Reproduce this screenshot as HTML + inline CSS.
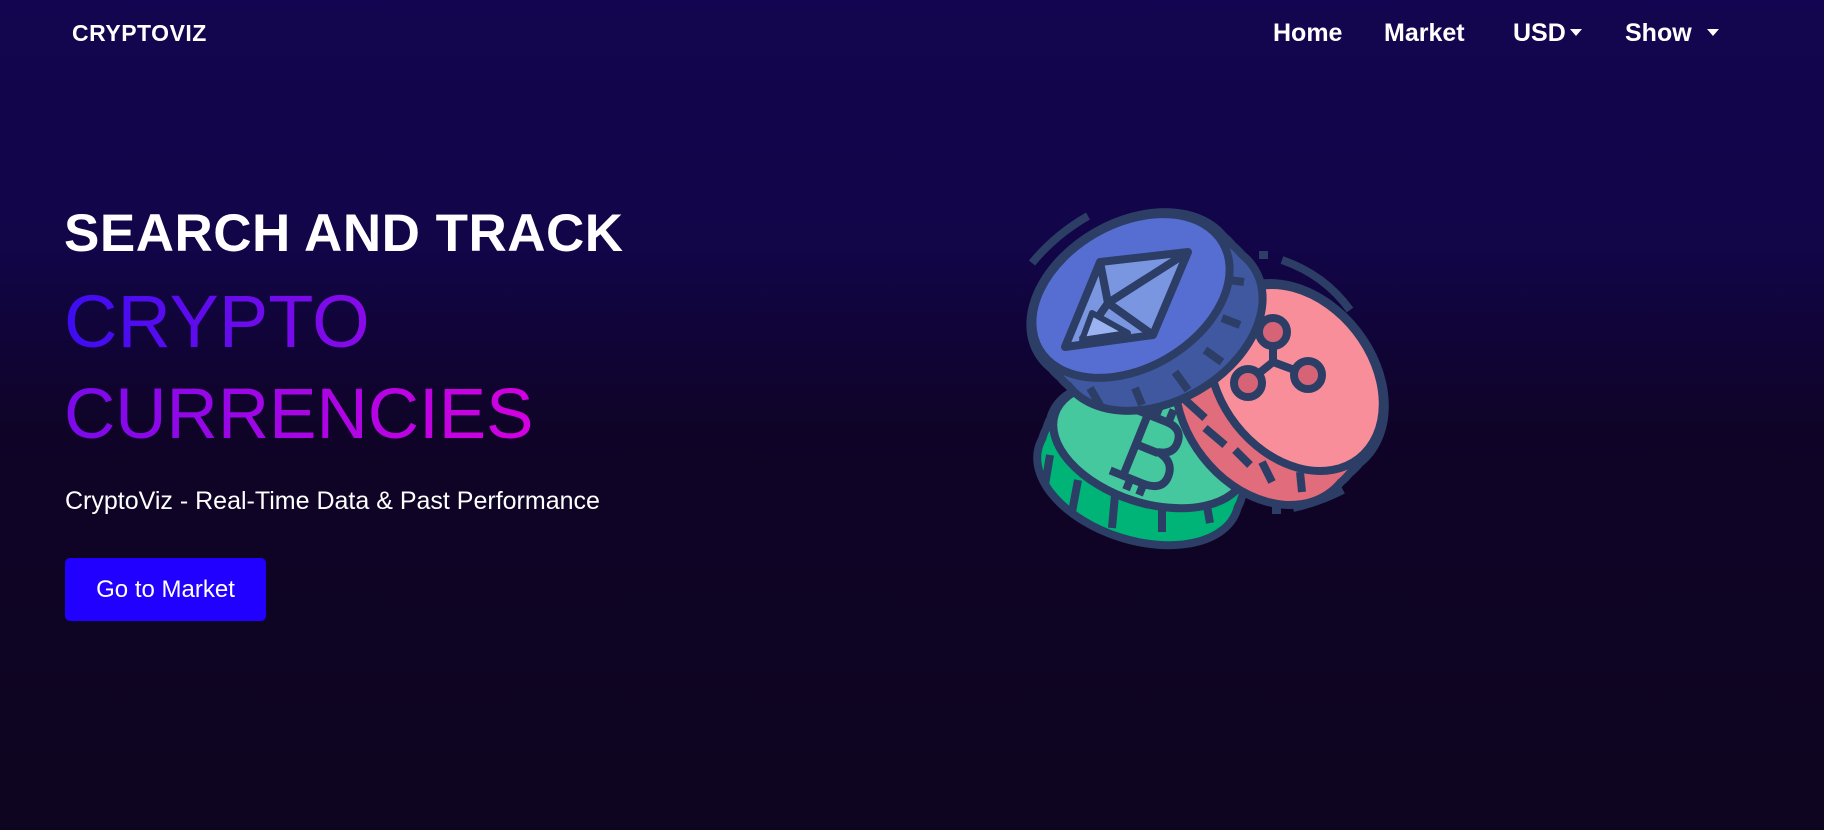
<!DOCTYPE html>
<html><head><meta charset="utf-8"><style>
html,body{margin:0;width:1824px;height:830px;overflow:hidden}
body{background:linear-gradient(180deg,#13054f 0%,#120548 30%,#0f0427 52%,#0e0520 100%);font-family:"Liberation Sans",sans-serif;color:#fff;position:relative}
.logo{position:absolute;left:72px;top:20px;font-size:23px;font-weight:bold;letter-spacing:0.5px}
.nav a{position:absolute;top:19px;font-size:25px;font-weight:bold;color:#fff;text-decoration:none}
.caret{display:inline-block;width:0;height:0;border-left:6px solid transparent;border-right:6px solid transparent;border-top:7px solid #fff;vertical-align:middle;margin-left:4px;margin-top:-4px}
h1{position:absolute;left:64px;top:203px;margin:0;font-size:53px;font-weight:bold;letter-spacing:0.5px;white-space:nowrap}
.g{position:absolute;left:64px;font-size:72px;line-height:1;-webkit-background-clip:text;background-clip:text;color:transparent;white-space:nowrap;display:inline-block}
.sub{position:absolute;left:65px;top:487px;font-size:25px}
.btn{position:absolute;left:65px;top:558px;width:201px;height:63px;background:#2200ff;border-radius:5px;font-size:24px;line-height:63px;text-align:center}
</style></head><body>
<div class="logo">CRYPTOVIZ</div>
<div class="nav">
<a style="left:1273px">Home</a>
<a style="left:1384px">Market</a>
<a style="left:1513px">USD<span class="caret"></span></a>
<a style="left:1625px">Show <span class="caret" style="margin-left:8px"></span></a>
</div>
<h1>SEARCH AND TRACK</h1>
<div class="g" style="top:285px;font-size:74px;background-image:linear-gradient(90deg,#3d0cf2,#8a0ae8)">CRYPTO</div>
<div class="g" style="top:379px;font-size:71px;background-image:linear-gradient(90deg,#7a0aea,#d400e0)">CURRENCIES</div>
<div class="sub">CryptoViz - Real-Time Data &amp; Past Performance</div>
<div class="btn">Go to Market</div>
<svg style="position:absolute;left:1000px;top:190px" width="400" height="380" viewBox="0 0 400 380">
<defs>
<ellipse id="eg" cx="0" cy="0" rx="100" ry="58"/>
<ellipse id="ep" cx="0" cy="0" rx="76" ry="102"/>
<ellipse id="eb" cx="0" cy="0" rx="106" ry="72"/>
</defs>
<g stroke="#2c3e66" stroke-width="8" fill="none" stroke-linecap="butt">
<path d="M32 73 Q55 45 88 26"/>
<path d="M259 65 L268 65"/>
<path d="M282 70 Q325 85 350 120"/>
<path d="M272 320 L281 320"/>
<path d="M293 318 Q320 312 343 300"/>
</g>
<g fill="#2c3e66" stroke="#2c3e66" stroke-width="16">
<use href="#eg" transform="translate(150 258) rotate(18)"/>
<use href="#eg" transform="translate(146 268) rotate(18)"/>
<use href="#eg" transform="translate(142 278) rotate(18)"/>
<use href="#eg" transform="translate(138 288) rotate(18)"/>
</g>
<g fill="#00b377">
<use href="#eg" transform="translate(146 268) rotate(18)"/>
<use href="#eg" transform="translate(142 278) rotate(18)"/>
<use href="#eg" transform="translate(138 288) rotate(18)"/>
</g>
<g stroke="#2c3e66" stroke-width="8">
<path d="M50 265 L45 295 M78 290 L72 322 M115 305 L112 338 M162 312 L162 342 M205 305 L210 333"/>
<use href="#eg" transform="translate(150 255) rotate(18)" fill="#45c89d"/>
</g>
<g transform="rotate(22 150 262)" stroke="#2c3e66" stroke-width="8" fill="#45c89d" stroke-linejoin="round">
<path d="M134 228 L154 228 Q172 228 172 244 Q172 256 158 259 Q176 262 176 278 Q176 294 154 294 L134 294 Z M134 260 L158 260"/>
<path d="M120 228 L134 228 M120 294 L134 294 M142 214 L142 228 M156 214 L156 228 M142 294 L142 306 M156 294 L156 306" fill="none"/>
</g>
<g fill="#2c3e66" stroke="#2c3e66" stroke-width="16">
<use href="#ep" transform="translate(294 190) rotate(-38)"/>
<use href="#ep" transform="translate(284 200) rotate(-38)"/>
<use href="#ep" transform="translate(274 210) rotate(-38)"/>
<use href="#ep" transform="translate(266 218) rotate(-38)"/>
</g>
<g fill="#e06c7c">
<use href="#ep" transform="translate(284 200) rotate(-38)"/>
<use href="#ep" transform="translate(274 210) rotate(-38)"/>
<use href="#ep" transform="translate(266 218) rotate(-38)"/>
</g>
<g stroke="#2c3e66" stroke-width="8">
<path d="M183 208 L205 228 M205 238 L225 255 M235 260 L250 275 M262 272 L272 292 M300 282 L302 302"/>
<use href="#ep" transform="translate(296 188) rotate(-38)" fill="#f78e9a"/>
<path d="M273 142 L273 172 L248 192 M273 172 L308 185" fill="none"/>
<circle cx="273" cy="142" r="14" fill="#d66476"/>
<circle cx="248" cy="193" r="14" fill="#d66476"/>
<circle cx="308" cy="185" r="14" fill="#d66476"/>
</g>
<g fill="#2c3e66" stroke="#2c3e66" stroke-width="16">
<use href="#eb" transform="translate(133 108) rotate(-30)"/>
<use href="#eb" transform="translate(142 117) rotate(-30)"/>
<use href="#eb" transform="translate(151 126) rotate(-30)"/>
<use href="#eb" transform="translate(160 135) rotate(-30)"/>
</g>
<g fill="#3f58a0">
<use href="#eb" transform="translate(142 117) rotate(-30)"/>
<use href="#eb" transform="translate(151 126) rotate(-30)"/>
<use href="#eb" transform="translate(160 135) rotate(-30)"/>
</g>
<g stroke="#2c3e66" stroke-width="8">
<path d="M90 198 L100 215 M135 198 L142 215 M175 182 L188 200 M205 160 L222 172 M222 128 L240 135 M228 90 L244 92"/>
<use href="#eb" transform="translate(131 106) rotate(-30)" fill="#566dd2"/>
</g>
<g stroke="#2c3e66" stroke-width="8" stroke-linejoin="round">
<path d="M100 72 L188 62 L153 145 L65 157 Z" fill="#7b96e0"/>
<path d="M108 113 L100 72 M108 113 L188 62 M108 113 L153 145 M108 113 L82 150" fill="none"/>
<path d="M92 123 L82 150 L128 143 Z" fill="#9bb3f0" stroke-width="6"/>
</g>
</svg>
</body></html>
